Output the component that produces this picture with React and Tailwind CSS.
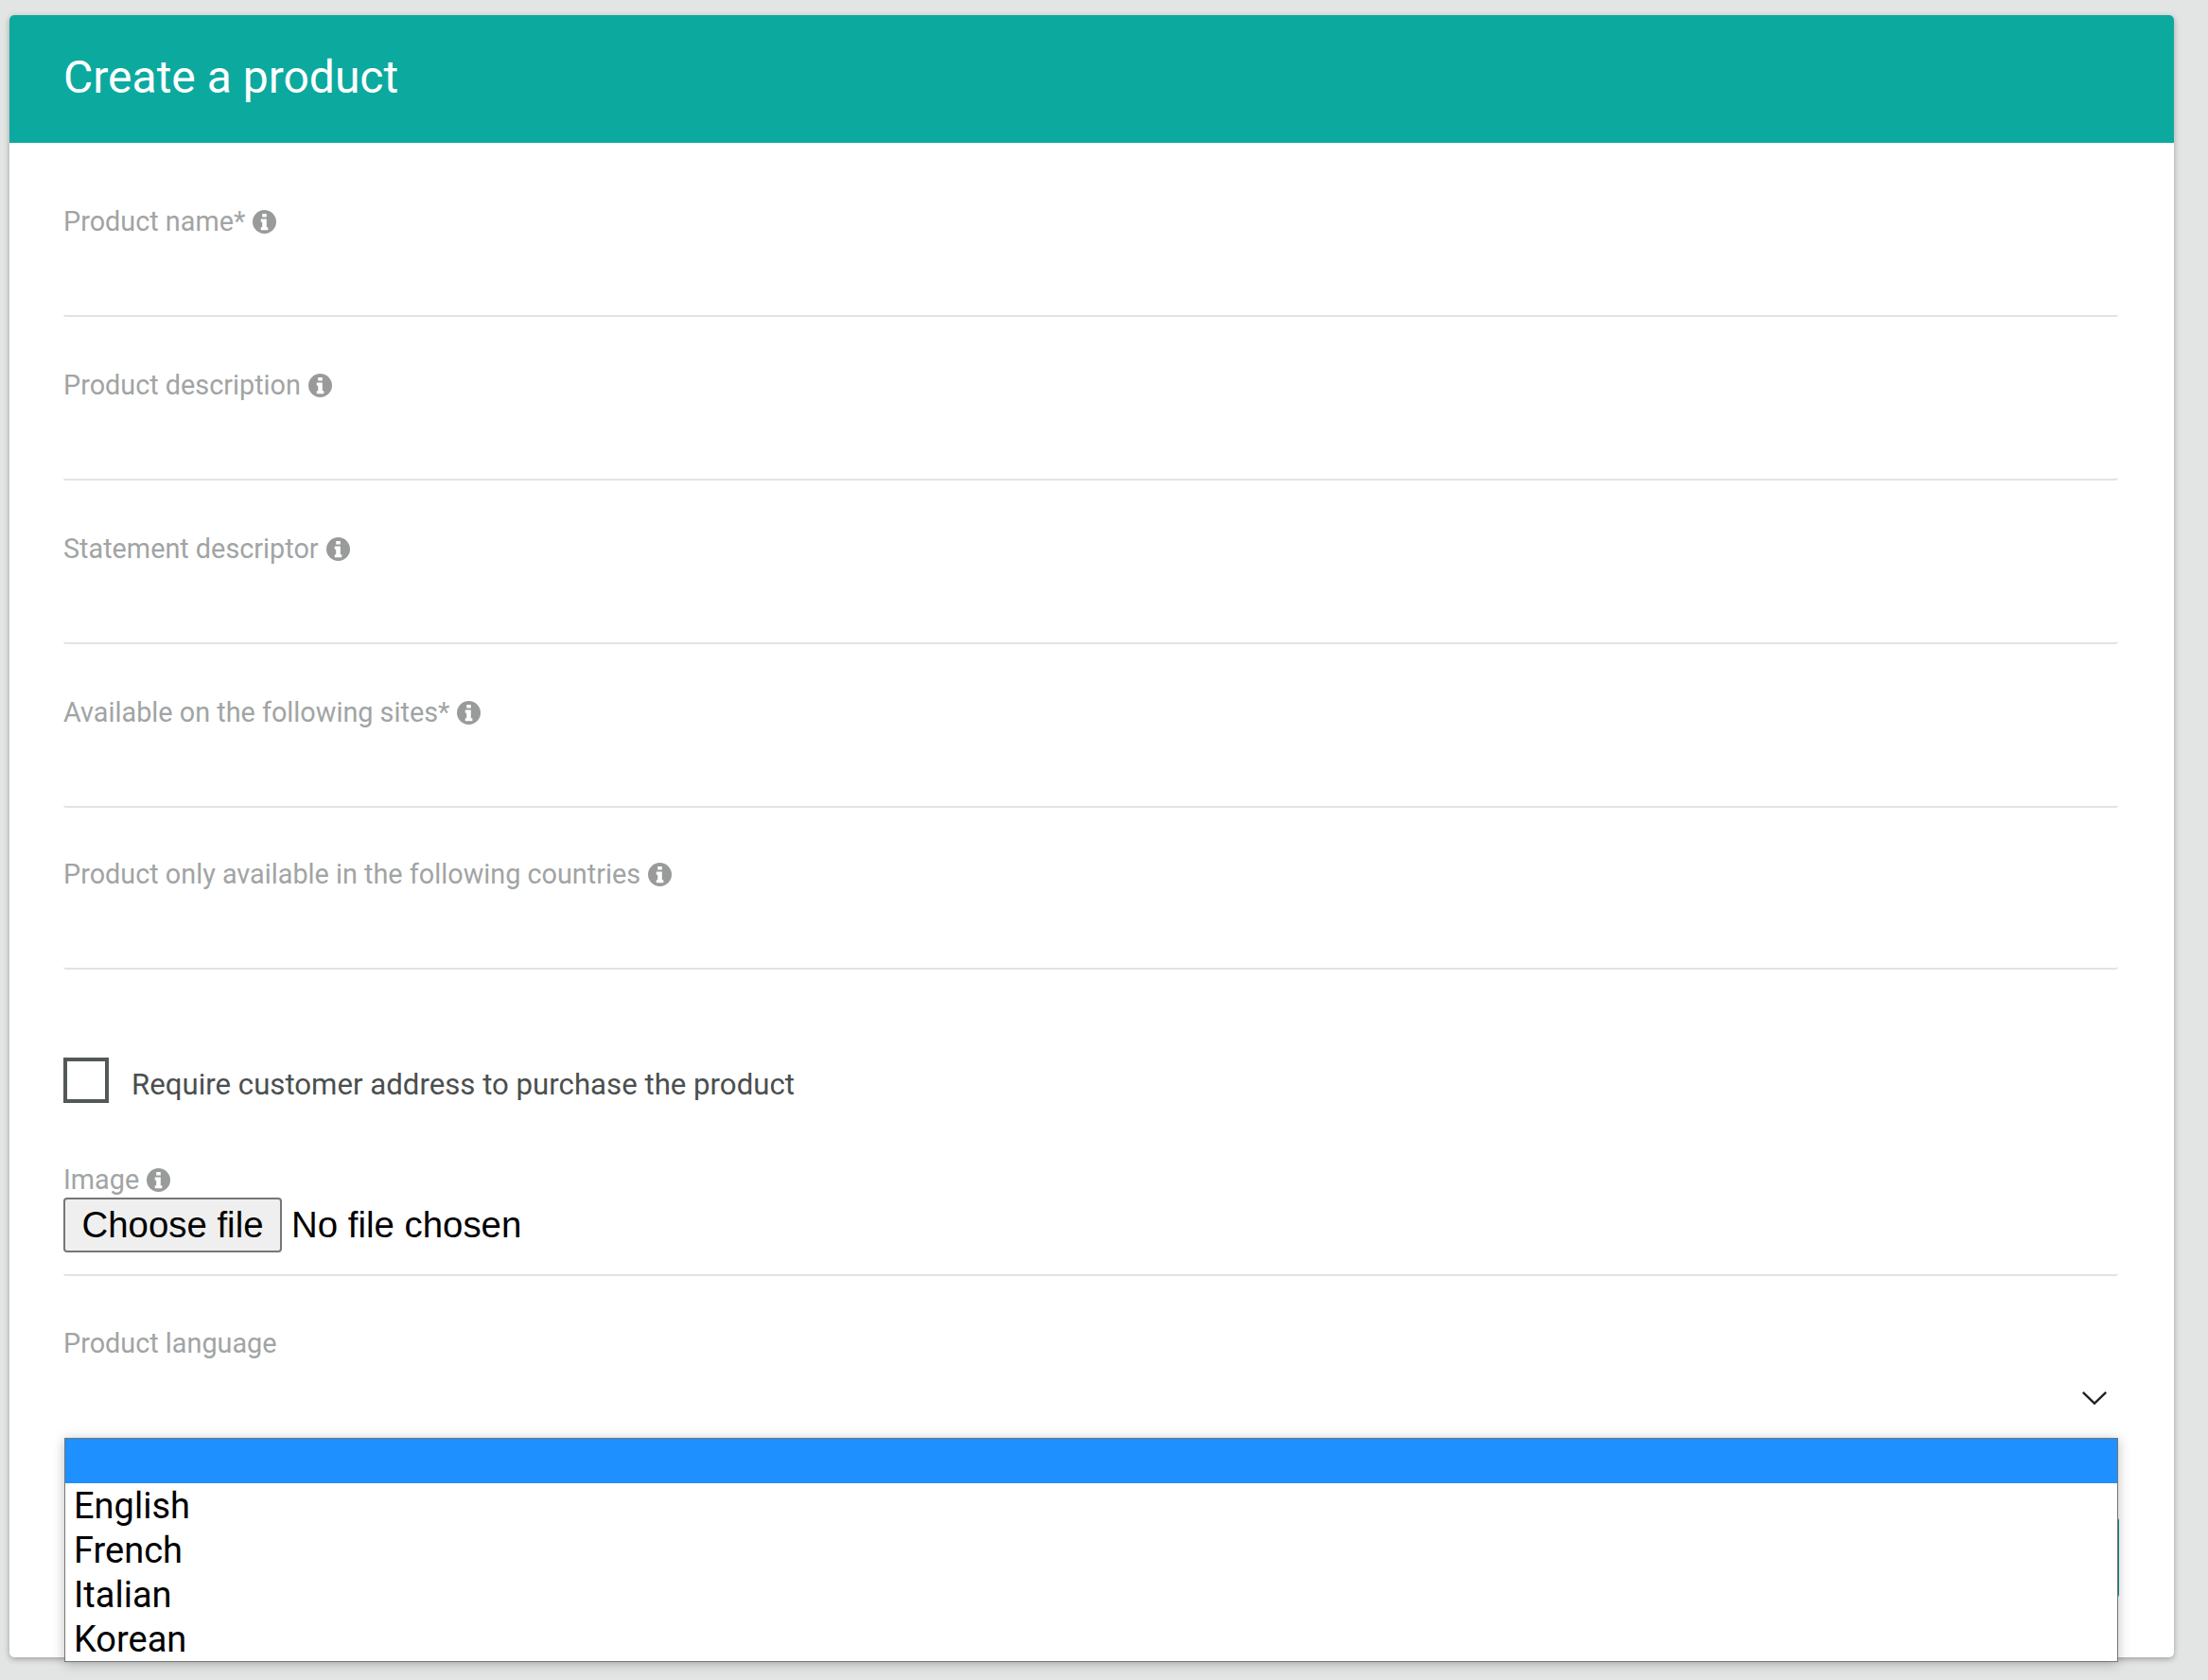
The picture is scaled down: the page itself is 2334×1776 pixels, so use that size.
import React from "react";

function Info() {
  return (
    <svg viewBox="0 0 24 24" className="ml-2 h-[25px] w-[25px] shrink-0" aria-hidden="true">
      <circle cx="12" cy="12" r="12" fill="#999b9b" />
      <path
        fill="#fff"
        d="M9.8 3.8h4.4v3.4H9.8zM8.4 9.2h5.8v8.2h1.5v3H8.4v-3h1.4v-5.2H8.4z"
      />
    </svg>
  );
}

function Field({ label, className }) {
  return (
    <div className={`h-[119px] rounded-b-[3px] border-b-2 border-[#e2e4e4] ${className}`}>
      <div className="flex h-[36px] items-center text-[28.8px] leading-[36px] text-[#a1a4a4]">
        <span>{label}</span>
        <Info />
      </div>
    </div>
  );
}

export default function App() {
  return (
    <div className="h-[1776px] overflow-hidden bg-[#e3e5e5] pl-[10px] pt-4 font-['Roboto',sans-serif]">
      <div className="relative h-[1736px] w-[2288px] rounded-[5px] bg-white shadow-[0_2px_6px_rgba(0,0,0,0.3)]">
        <div className="flex h-[135px] items-center rounded-t-[5px] bg-[#0ca99f] pb-[3px] pl-[57px]">
          <h1 className="text-[48px] leading-[56px] text-white">Create a product</h1>
        </div>

        <div className="flex flex-col pl-[57px] pr-[59px] pt-[65px]">
          <Field label="Product name*" />
          <Field label="Product description" className="mt-[54px]" />
          <Field label="Statement descriptor" className="mt-[54px]" />
          <Field label="Available on the following sites*" className="mt-[54px]" />
          <Field label="Product only available in the following countries" className="mt-[52px]" />

          <label className="mt-[93px] flex h-[48px] items-start">
            <span className="h-[48px] w-[48px] shrink-0 border-4 border-[#535858]" />
            <span className="ml-[24px] mt-[9px] text-[31.2px] leading-[40px] text-[#4a4f4f]">
              Require customer address to purchase the product
            </span>
          </label>

          <div className="mt-[65px] rounded-b-[3px] border-b-2 border-[#e2e4e4] pb-[23px]">
            <div className="flex h-[35px] items-center pb-[3px] text-[28.8px] leading-[32px] text-[#a1a4a4]">
              <span>Image</span>
              <Info />
            </div>
            <div className="flex h-[58px] items-center font-['Liberation_Sans',Arial,sans-serif]">
              <button className="h-[58px] w-[231px] rounded-[4px] border-2 border-[#767676] bg-[#efefef] text-[38.4px] leading-none text-black">
                Choose file
              </button>
              <span className="ml-[10px] text-[38.4px] leading-none text-black">No file chosen</span>
            </div>
          </div>

          <div className="mt-[53px] flex h-[36px] items-center text-[28.8px] leading-[36px] text-[#a1a4a4]">
            Product language
          </div>
          <div className="mt-[33px] flex justify-end pr-[12px]">
            <svg width="26" height="14" viewBox="0 0 26 14" fill="none" stroke="#222" strokeWidth="2.4">
              <path d="M0.8 0.8 L13 12.6 L25.2 0.8" />
            </svg>
          </div>
          <div className="mt-[119px] flex justify-end">
            <button className="mr-[-1px] h-[85px] w-[240px] rounded-[4px] bg-[#0c8f87]" aria-label="Save" />
          </div>
        </div>

        <div className="absolute left-[58px] top-[1504px] w-[2171px] border border-[#767676] bg-white text-[38px] leading-[47px] text-black shadow-[0_2px_12px_rgba(0,0,0,0.25)]">
          <div className="h-[47px] bg-[#1e90ff]" />
          {["English", "French", "Italian", "Korean"].map((o) => (
            <div key={o} className="h-[47px] pl-[9px] pt-[1px]">
              {o}
            </div>
          ))}
        </div>
      </div>
    </div>
  );
}
